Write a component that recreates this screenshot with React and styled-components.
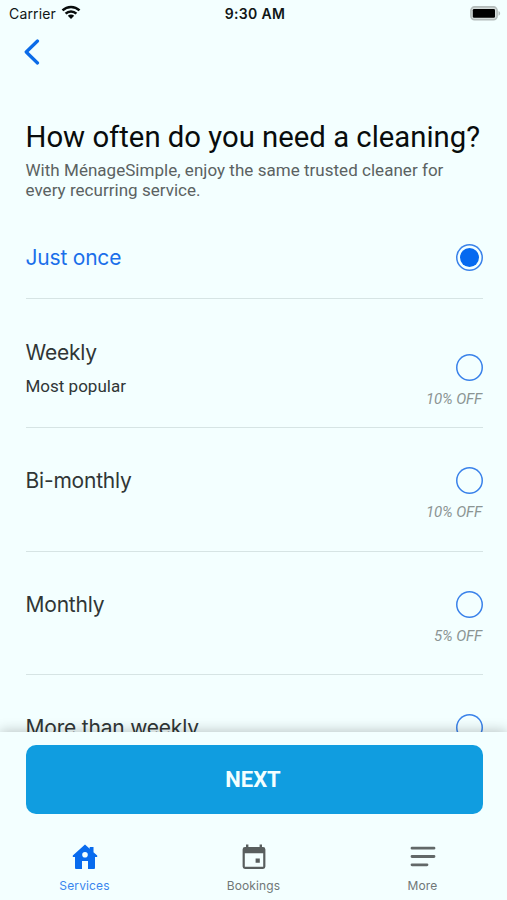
import styled, { createGlobalStyle } from "styled-components";

const options = [
  { label: "Just once", selected: true, height: 82, top: 26, radioTop: 26.5 },
  {
    label: "Weekly",
    note: "Most popular",
    discount: "10% OFF",
    height: 129,
    top: 38.5,
    radioTop: 55,
  },
  { label: "Bi-monthly", discount: "10% OFF", height: 124, top: 38 },
  { label: "Monthly", discount: "5% OFF", height: 123, top: 38 },
  { label: "More than weekly", height: 123, top: 38 },
];

const WifiIcon = () => (
  <svg width="20" height="15" viewBox="0 0 20 15">
    <g fill="none" stroke="#080c0c" strokeWidth="2.5">
      <path d="M1.5 5.4C6.3.8 13.7.8 18.5 5.4" />
      <path d="M4.6 8.6c3-2.9 7.8-2.9 10.8 0" />
    </g>
    <path d="M6.8 10.8c1.8-1.7 4.6-1.7 6.4 0L10 14z" fill="#080c0c" />
  </svg>
);

const BatteryIcon = () => (
  <svg width="31" height="15" viewBox="0 0 31 15">
    <rect
      x=".9"
      y=".9"
      width="26.2"
      height="12.8"
      rx="3.6"
      fill="#d5dcdb"
      stroke="#b4bcbb"
      strokeWidth="1.6"
    />
    <rect x="2.8" y="2.9" width="22.2" height="8.8" rx="1.3" fill="#000" />
    <path d="M28.5 5c2.2.9 2.2 3.9 0 4.8z" fill="#b4bcbb" />
  </svg>
);

const BackIcon = () => (
  <svg width="16" height="26" viewBox="0 0 16 26">
    <path
      d="M13.5 2 2.2 13l11.3 11"
      fill="none"
      stroke="#0b6be8"
      strokeWidth="3.2"
      strokeLinecap="round"
      strokeLinejoin="round"
    />
  </svg>
);

const HomeIcon = () => (
  <svg width="26" height="26" viewBox="0 0 26 26">
    <path
      fillRule="evenodd"
      fill="#086bee"
      d="M13 .5.8 11.6V13H3v11q0 1 1 1h6v-8h6v8h6q1 0 1-1V13h2.2v-1.400L21.500 8.200V3h-3.800v1.700zM13 8a2.800 2.800 0 1 1 0 5.600 2.800 2.800 0 0 1 0-5.600z"
    />
  </svg>
);

const CalendarIcon = () => (
  <svg width="26" height="26" viewBox="0 0 26 26">
    <path
      fillRule="evenodd"
      fill="#585e5e"
      d="M5 .5h2.4V3h11.2V.5H21V3h1a2.4 2.4 0 0 1 2.4 2.4v17.2A2.4 2.4 0 0 1 22 25H4a2.4 2.4 0 0 1-2.4-2.4V5.4A2.4 2.4 0 0 1 4 3h1zM3.8 9.3v13.5h18.4V9.3zM14.6 14.6h4.2v4.2h-4.2z"
    />
  </svg>
);

const MenuIcon = () => (
  <svg width="26" height="26" viewBox="0 0 26 26">
    <path
      d="M2 4.2h22M2 12.5h22M2 20.8h15"
      fill="none"
      stroke="#626868"
      strokeWidth="2.8"
      strokeLinecap="round"
    />
  </svg>
);

const App = () => {
  return (
    <Screen>
      <GlobalStyle />
      <Content>
        <StatusBar>
          <Carrier>
            Carrier
            <WifiIcon />
          </Carrier>
          <Time>9:30 AM</Time>
          <Battery>
            <BatteryIcon />
          </Battery>
        </StatusBar>
        <BackButton aria-label="Back">
          <BackIcon />
        </BackButton>
        <Intro>
          <Title>How often do you need a cleaning?</Title>
          <Subtitle>
            With MénageSimple, enjoy the same trusted cleaner for
            <br />
            every recurring service.
          </Subtitle>
        </Intro>
        <OptionList>
          {options.map((option) => (
            <Option key={option.label} $height={option.height}>
              <OptionText $top={option.top}>
                <OptionLabel $selected={option.selected}>
                  {option.label}
                </OptionLabel>
                {option.note && <Note>{option.note}</Note>}
              </OptionText>
              <OptionSide $top={option.radioTop || option.top + 1}>
                <Radio $selected={option.selected} />
                {option.discount && <Discount>{option.discount}</Discount>}
              </OptionSide>
            </Option>
          ))}
        </OptionList>
      </Content>
      <Footer>
        <NextButton>NEXT</NextButton>
        <TabBar>
          <Tab $active>
            <HomeIcon />
            <span>Services</span>
          </Tab>
          <Tab>
            <CalendarIcon />
            <span>Bookings</span>
          </Tab>
          <Tab>
            <MenuIcon />
            <span>More</span>
          </Tab>
        </TabBar>
      </Footer>
    </Screen>
  );
};

const GlobalStyle = createGlobalStyle`
  * {
    box-sizing: border-box;
  }
  body {
    margin: 0;
    background: #f3ffff;
  }
`;

const Screen = styled.div`
  display: flex;
  flex-direction: column;
  height: 900px;
  overflow: hidden;
  background: #f3ffff;
  font-family: Roboto, sans-serif;
`;

const Content = styled.main`
  height: 732px;
  flex-shrink: 0;
  overflow: hidden;
`;

const StatusBar = styled.div`
  display: grid;
  grid-template-columns: 1fr auto 1fr;
  align-items: center;
  height: 27px;
  padding: 0 6px 0 9px;
  font-family: Inter, sans-serif;
  font-size: 14px;
  color: #101616;
`;

const Carrier = styled.div`
  display: flex;
  align-items: center;
  gap: 5px;
  letter-spacing: 0.15px;
  svg {
    margin-top: -2px;
  }
`;

const Time = styled.div`
  font-weight: 600;
  letter-spacing: 0.3px;
`;

const Battery = styled.div`
  display: flex;
  justify-content: flex-end;
  margin-top: -1px;
`;

const BackButton = styled.button`
  display: flex;
  margin: 12px 0 0 24px;
  padding: 0;
  border: none;
  background: none;
`;

const Intro = styled.header`
  padding: 54px 0 0 25.5px;
`;

const Title = styled.h1`
  margin: 0;
  font-size: 29.3px;
  font-weight: 400;
  line-height: 36px;
  white-space: nowrap;
  color: #080c0c;
`;

const Subtitle = styled.p`
  margin: 5px 0 0;
  font-size: 17px;
  line-height: 20px;
  letter-spacing: 0.03px;
  white-space: nowrap;
  color: #5b6262;
`;

const OptionList = styled.div`
  margin-top: 17px;
  padding: 0 24px 0 25.5px;
`;

const Option = styled.div`
  display: flex;
  justify-content: space-between;
  height: ${(props) => props.$height}px;
  border-bottom: 1px solid #d6e4e4;
`;

const OptionText = styled.div`
  padding-top: ${(props) => props.$top}px;
`;

const OptionLabel = styled.div`
  font-family: Inter, sans-serif;
  font-size: 21px;
  line-height: 30px;
  letter-spacing: -0.2px;
  color: ${(props) => (props.$selected ? "#1a6fea" : "#303636")};
`;

const Note = styled.div`
  margin-top: 8.5px;
  font-size: 17px;
  line-height: 20px;
  color: #303636;
`;

const OptionSide = styled.div`
  display: flex;
  flex-direction: column;
  align-items: flex-end;
  padding-top: ${(props) => props.$top}px;
`;

const Radio = styled.div`
  display: flex;
  align-items: center;
  justify-content: center;
  width: 27px;
  height: 27px;
  border-radius: 50%;
  box-shadow: inset 0 0 0 1.5px #3a82ea;

  &::after {
    content: "";
    width: 19px;
    height: 19px;
    border-radius: 50%;
    background: ${(props) => (props.$selected ? "#0569f0" : "transparent")};
  }
`;

const Discount = styled.div`
  margin-top: 9px;
  padding-right: 1px;
  font-size: 15px;
  font-style: italic;
  line-height: 18px;
  letter-spacing: -0.1px;
  color: #8b9493;
`;

const Footer = styled.footer`
  position: relative;
  height: 168px;
  padding: 12.5px 24.5px 0 25.5px;
  background: #f3ffff;
  box-shadow: 0 -1px 12px rgba(0, 0, 0, 0.24);
`;

const NextButton = styled.button`
  display: block;
  width: 100%;
  height: 69.5px;
  padding: 1px 2px 0 0;
  border: none;
  border-radius: 10px;
  background: #109de0;
  color: #f3ffff;
  font-family: Roboto, sans-serif;
  font-size: 22px;
  font-weight: 700;
`;

const TabBar = styled.nav`
  display: grid;
  grid-template-columns: repeat(3, 1fr);
  margin: 30px -24.5px 0 -25.5px;
`;

const Tab = styled.div`
  display: flex;
  flex-direction: column;
  align-items: center;
  font-family: Inter, sans-serif;
  font-size: 12px;
  color: ${(props) => (props.$active ? "#3a86ee" : "#707777")};

  span {
    margin-top: 8px;
    line-height: 16px;
    letter-spacing: 0.15px;
  }
`;

export default App;
